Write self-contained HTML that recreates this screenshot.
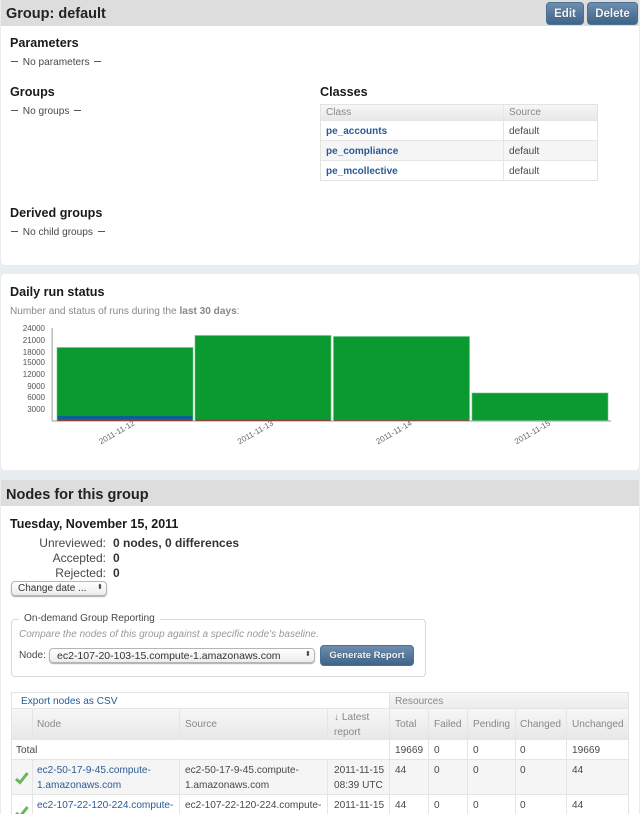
<!DOCTYPE html>
<html><head><meta charset="utf-8"><style>
html,body{margin:0;padding:0}
body{width:640px;height:814px;overflow:hidden;background:#e8edf0;position:relative;font-family:"Liberation Sans",sans-serif;color:#484848;font-size:10.1px}
div{position:absolute;box-sizing:border-box}
.t{white-space:nowrap;line-height:14px;filter:blur(.3px)}
.h1{font-size:14.5px;font-weight:bold;color:#222;line-height:18px}
.h2{font-size:12.6px;font-weight:bold;color:#1a1a1a;line-height:16px}
.g{color:#888}
.l{color:#2a5a96}
.b{font-weight:bold}
.d{display:inline-block;width:7px;height:1px;background:#555;vertical-align:3px;margin-right:2px}
.d.e{margin:0 0 0 2px}
.btn{border-radius:4px;background:linear-gradient(#6d8eae,#3f6389);border:1px solid #4c6f94;color:#f2f5f8;font-weight:bold;font-size:11.5px;text-align:center;line-height:22px;text-shadow:0 0 1px #345}
.sel{border:1px solid #b5b5b5;border-radius:4px;background:linear-gradient(#fff,#ececec);box-shadow:0 1px 1px #aaa;color:#333}
.v{background:#e5e5e5;width:1px}
.r{background:#e5e5e5;height:1px}
</style></head><body>
<div style="left:1px;top:0;width:638px;height:265px;background:#fff;border-radius:0 0 4px 4px"></div>
<div style="left:1px;top:0;width:638px;height:26px;background:#ddd"></div>
<div class="t h1" style="left:6px;top:5px">Group: default</div>
<div class="btn" style="left:546px;top:2px;width:38px;height:23px">Edit</div>
<div class="btn" style="left:587px;top:2px;width:51px;height:23px">Delete</div>
<div class="t h2" style="left:10px;top:35px">Parameters</div>
<div class="t" style="left:11px;top:56px"><span class="d"></span> No parameters <span class="d e"></span></div>
<div class="t h2" style="left:10px;top:84px">Groups</div>
<div class="t" style="left:11px;top:105px"><span class="d"></span> No groups <span class="d e"></span></div>
<div class="t h2" style="left:320px;top:84px">Classes</div>
<div class="t h2" style="left:10px;top:205px">Derived groups</div>
<div class="t" style="left:11px;top:226px"><span class="d"></span> No child groups <span class="d e"></span></div>

<div style="left:320px;top:104px;width:278px;height:77px;border:1px solid #e3e3e3;background:#fff"></div>
<div style="left:321px;top:105px;width:276px;height:15px;background:linear-gradient(#f7f7f7,#e8e8e8)"></div>
<div style="left:321px;top:140px;width:276px;height:20px;background:#f5f5f5"></div>
<div class="r" style="left:321px;top:120px;width:276px"></div>
<div class="r" style="left:321px;top:140px;width:276px"></div>
<div class="r" style="left:321px;top:160px;width:276px"></div>
<div class="v" style="left:503px;top:105px;height:75px"></div>
<div class="t g" style="left:326px;top:106px">Class</div>
<div class="t g" style="left:509px;top:106px">Source</div>
<div class="t l b" style="left:326px;top:125px;font-size:10px">pe_accounts</div>
<div class="t l b" style="left:326px;top:145px;font-size:10px">pe_compliance</div>
<div class="t l b" style="left:326px;top:165px;font-size:10px">pe_mcollective</div>
<div class="t" style="left:509px;top:125px">default</div>
<div class="t" style="left:509px;top:145px">default</div>
<div class="t" style="left:509px;top:165px">default</div>

<div style="left:1px;top:274px;width:638px;height:196px;background:#fff;border-radius:4px"></div>
<div class="t h2" style="left:10px;top:284px">Daily run status</div>
<div class="t g" style="left:10px;top:305px">Number and status of runs during the <span class="b">last 30 days</span>:</div>
<svg style="position:absolute;left:0;top:320px" width="640" height="130" viewBox="0 320 640 130">
<g font-family="Liberation Sans" font-size="8" fill="#555" text-anchor="end">
<text x="45" y="331">24000</text><text x="45" y="343">21000</text><text x="45" y="355">18000</text><text x="45" y="365">15000</text><text x="45" y="377">12000</text><text x="45" y="389">9000</text><text x="45" y="400">6000</text><text x="45" y="412">3000</text>
</g>
<rect x="51.5" y="328" width="1.2" height="93" fill="#aaa"/>
<rect x="52" y="420.5" width="559" height="1" fill="#999"/>
<rect x="57" y="347.5" width="136" height="73" fill="#0a9a30" stroke="#6cc486" stroke-width=".6"/>
<rect x="57.5" y="416" width="135" height="3.2" fill="#0b5f97"/>
<rect x="57.5" y="419" width="135" height="2" fill="#8f4036"/>
<rect x="195" y="335.5" width="136" height="85" fill="#0a9a30" stroke="#6cc486" stroke-width=".6"/>
<rect x="195.5" y="419.8" width="135" height="1.2" fill="#8f4036"/>
<rect x="333.5" y="336.5" width="136" height="84" fill="#0a9a30" stroke="#6cc486" stroke-width=".6"/>
<rect x="334" y="420" width="135" height="1" fill="#7a5a40"/>
<rect x="472" y="393" width="136" height="27.5" fill="#0a9a30" stroke="#6cc486" stroke-width=".6"/>
<g font-family="Liberation Sans" font-size="8" fill="#666">
<text transform="translate(101,444.500) rotate(-30)">2011-11-12</text>
<text transform="translate(239.500,444.500) rotate(-30)">2011-11-13</text>
<text transform="translate(378,444.500) rotate(-30)">2011-11-14</text>
<text transform="translate(516.500,444.500) rotate(-30)">2011-11-15</text>
</g>
</svg>

<div style="left:1px;top:480px;width:638px;height:334px;background:#fff"></div>
<div style="left:1px;top:480px;width:638px;height:26px;background:#ddd"></div>
<div class="t h1" style="left:6px;top:486px">Nodes for this group</div>
<div class="t h2" style="left:10px;top:516px;font-size:12.5px">Tuesday, November 15, 2011</div>
<div class="t" style="right:534px;top:536px;font-size:12px">Unreviewed:</div>
<div class="t b" style="left:113px;top:536px;font-size:12px;color:#333">0 nodes, 0 differences</div>
<div class="t" style="right:534px;top:551px;font-size:12px">Accepted:</div>
<div class="t b" style="left:113px;top:551px;font-size:12px;color:#333">0</div>
<div class="t" style="right:534px;top:566px;font-size:12px">Rejected:</div>
<div class="t b" style="left:113px;top:566px;font-size:12px;color:#333">0</div>
<div class="sel t" style="left:11px;top:581px;width:96px;height:15px;font-size:10px;line-height:14px;padding-left:6px">Change date ...<span style="position:absolute;left:85px;top:-1px;font-size:7px">⬍</span></div>

<div style="left:11px;top:619px;width:415px;height:58px;border:1px solid #d8d8d8;border-radius:4px"></div>
<div class="t" style="left:19px;top:612px;background:#fff;padding:0 5px">On-demand Group Reporting</div>
<div class="t g" style="left:19px;top:628px;font-style:italic;font-size:10px;color:#999">Compare the nodes of this group against a specific node's baseline.</div>
<div class="t" style="left:19px;top:649px">Node:</div>
<div class="sel t" style="left:49px;top:648px;width:266px;height:15px;font-size:10.5px;line-height:14px;padding-left:7px;color:#333">ec2-107-20-103-15.compute-1.amazonaws.com<span style="position:absolute;left:255px;top:-1px;font-size:7px">⬍</span></div>
<div class="btn" style="left:320px;top:645px;width:94px;height:21px;font-size:9.6px;line-height:20px">Generate Report</div>

<div style="left:11px;top:692px;width:618px;height:122px;border:1px solid #e3e3e3;border-bottom:0;background:#fff"></div>
<div style="left:390px;top:693px;width:238px;height:15px;background:linear-gradient(#f7f7f7,#ebebeb)"></div>
<div style="left:12px;top:708px;width:616px;height:31px;background:linear-gradient(#f7f7f7,#e8e8e8)"></div>
<div style="left:12px;top:760px;width:616px;height:34px;background:#f5f5f5"></div>
<div class="r" style="left:12px;top:708px;width:616px"></div>
<div class="r" style="left:12px;top:739px;width:616px"></div>
<div class="r" style="left:12px;top:759px;width:616px"></div>
<div class="r" style="left:12px;top:794px;width:616px"></div>
<div class="v" style="left:389px;top:693px;height:121px"></div>
<div class="v" style="left:32px;top:708px;height:31px"></div>
<div class="v" style="left:179px;top:708px;height:31px"></div>
<div class="v" style="left:327px;top:708px;height:31px"></div>
<div class="v" style="left:32px;top:759px;height:55px"></div>
<div class="v" style="left:179px;top:759px;height:55px"></div>
<div class="v" style="left:327px;top:759px;height:55px"></div>
<div class="v" style="left:428px;top:708px;height:106px"></div>
<div class="v" style="left:467px;top:708px;height:106px"></div>
<div class="v" style="left:515px;top:708px;height:106px"></div>
<div class="v" style="left:566px;top:708px;height:106px"></div>
<div class="t l" style="left:21px;top:695px">Export nodes as CSV</div>
<div class="t g" style="left:395px;top:695px">Resources</div>
<div class="t g" style="left:37px;top:718px">Node</div>
<div class="t g" style="left:185px;top:718px">Source</div>
<div class="t g" style="left:334px;top:710px;line-height:15px">↓ Latest<br>report</div>
<div class="t g" style="left:395px;top:718px">Total</div>
<div class="t g" style="left:434px;top:718px">Failed</div>
<div class="t g" style="left:473px;top:718px">Pending</div>
<div class="t g" style="left:520px;top:718px">Changed</div>
<div class="t g" style="left:572px;top:718px">Unchanged</div>
<div class="t" style="left:16px;top:744px">Total</div>
<div class="t" style="left:395px;top:744px">19669</div>
<div class="t" style="left:434px;top:744px">0</div>
<div class="t" style="left:473px;top:744px">0</div>
<div class="t" style="left:520px;top:744px">0</div>
<div class="t" style="left:572px;top:744px">19669</div>

<svg style="position:absolute;left:13px;top:770px" width="17" height="44" viewBox="0 0 17 44"><path d="M3 9 L7 12.500 L14.500 3" fill="none" stroke="#68b658" stroke-width="3"/><path d="M3 43 L7 46.500 L14.500 37" fill="none" stroke="#68b658" stroke-width="3"/></svg>

<div class="t l" style="left:37px;top:763px;line-height:15px">ec2-50-17-9-45.compute-<br>1.amazonaws.com</div>
<div class="t" style="left:185px;top:763px;line-height:15px">ec2-50-17-9-45.compute-<br>1.amazonaws.com</div>
<div class="t" style="left:334px;top:763px;line-height:15px">2011-11-15<br>08:39 UTC</div>
<div class="t" style="left:395px;top:764px">44</div>
<div class="t" style="left:434px;top:764px">0</div>
<div class="t" style="left:473px;top:764px">0</div>
<div class="t" style="left:520px;top:764px">0</div>
<div class="t" style="left:572px;top:764px">44</div>
<div class="t l" style="left:37px;top:798px;line-height:15px">ec2-107-22-120-224.compute-</div>
<div class="t" style="left:185px;top:798px;line-height:15px">ec2-107-22-120-224.compute-</div>
<div class="t" style="left:334px;top:798px;line-height:15px">2011-11-15</div>
<div class="t" style="left:395px;top:799px">44</div>
<div class="t" style="left:434px;top:799px">0</div>
<div class="t" style="left:473px;top:799px">0</div>
<div class="t" style="left:520px;top:799px">0</div>
<div class="t" style="left:572px;top:799px">44</div>
</body></html>
